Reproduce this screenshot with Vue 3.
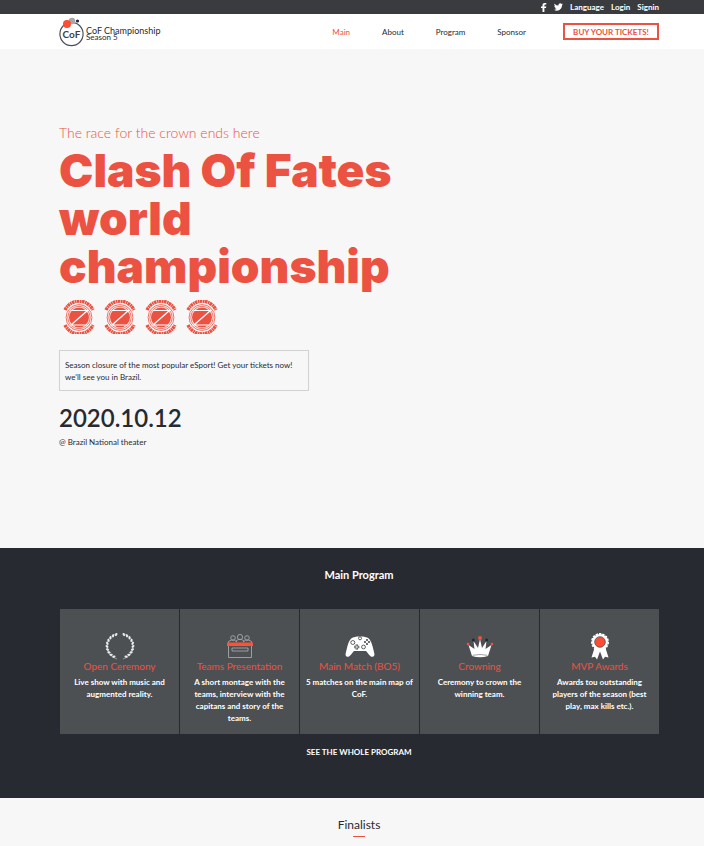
<script setup>
const tools = ['Language', 'Login', 'Signin']
const links = ['Main', 'About', 'Program', 'Sponsor']
const cards = [
  { icon: 'laurel', title: 'Open Ceremony', text: 'Live show with music and augmented reality.' },
  { icon: 'teams', title: 'Teams Presentation', text: 'A short montage with the teams, interview with the capitans and story of the teams.' },
  { icon: 'pad', title: 'Main Match (BO5)', text: '5 matches on the main map of CoF.' },
  { icon: 'crown', title: 'Crowning', text: 'Ceremony to crown the winning team.' },
  { icon: 'award', title: 'MVP Awards', text: 'Awards tou outstanding players of the season (best play, max kills etc.).' },
]
const leaves = Array.from({ length: 10 }, (_, i) => {
  const a = ((118 + i * 15) * Math.PI) / 180
  return { x: 15 + 13 * Math.cos(a), y: 14 + 12 * Math.sin(a), r: 118 + i * 15 }
})
</script>

<template>
  <div class="page">
    <div class="topbar wrap">
      <a href="#" aria-label="Facebook"><svg width="6" height="9" viewBox="0 0 6 9"><path d="M1.500 9V5.100H0V3.400h1.500V2.200C1.500.8 2.300 0 3.800 0h1.500v1.600H4.400c-.7 0-1 .3-1 .9v.9h1.900L5 5.100H3.400V9z" fill="#fff" /></svg></a>
      <a href="#" aria-label="Twitter"><svg width="9" height="8" viewBox="0 0 24 20"><path d="M24 2.400a10 10 0 0 1-2.800.8A5 5 0 0 0 23.300.5a10 10 0 0 1-3.100 1.200 5 5 0 0 0-8.400 4.500A14 14 0 0 1 1.700 1a5 5 0 0 0 1.500 6.600A5 5 0 0 1 1 7a5 5 0 0 0 3.900 4.800 5 5 0 0 1-2.200.1 5 5 0 0 0 4.600 3.400A10 10 0 0 1 0 17.400 14 14 0 0 0 21.500 5z" fill="#fff" /></svg></a>
      <a v-for="t in tools" :key="t" href="#">{{ t }}</a>
    </div>

    <header class="header wrap">
      <a class="brand" href="#">
        <svg class="logo" width="27" height="30" viewBox="0 0 27 30">
          <circle cx="12.500" cy="17" r="11.600" fill="#fff" stroke="#4b4e57" stroke-width="1.200" />
          <circle cx="13" cy="4" r="3.200" fill="#a9a5a8" />
          <circle cx="8" cy="7" r="4" fill="#fb4e33" />
          <circle cx="18.500" cy="4" r="1.600" fill="#1f2344" />
          <text x="12.500" y="21" text-anchor="middle" font-family="Lato, sans-serif" font-size="10" font-weight="700" fill="#3c3f4a">CoF</text>
        </svg>
        <span class="brand-text"><span class="brand-name">CoF Championship</span><span class="brand-sub">Season 5</span></span>
      </a>
      <nav class="nav">
        <a v-for="l in links" :key="l" href="#" :class="{ active: l === 'Main' }">{{ l }}</a>
      </nav>
      <button class="tickets" type="button">BUY YOUR TICKETS!</button>
    </header>

    <section class="hero wrap">
      <p class="lead">The race for the crown ends here</p>
      <h1>Clash Of Fates world championship</h1>
      <div class="badges">
        <svg v-for="n in 4" :key="n" width="34" height="34" viewBox="0 0 34 34" aria-hidden="true">
          <g fill="none" stroke="#ec5242">
            <path d="M3 10A15.500 15.500 0 0 1 31 10M3 25A15.500 15.500 0 0 0 31 25" stroke-width="3.400" stroke-dasharray="2.600 .5 1.600 .4" />
            <circle cx="17" cy="17.500" r="12.900" stroke-width=".8" />
            <circle cx="17" cy="17.500" r="11.200" stroke-width=".8" />
          </g>
          <circle cx="17" cy="17.500" r="10" fill="#ec5242" />
          <path d="M8.500 10.500h17L9 25h16.500" fill="none" stroke="#fff" stroke-width="1.200" />
        </svg>
      </div>
      <p class="note">Season closure of the most popular eSport! Get your tickets now! we'll see you in Brazil.</p>
      <p class="date">2020.10.12</p>
      <p class="place">@ Brazil National theater</p>
    </section>

    <section class="program wrap">
      <h2>Main Program</h2>
      <div class="cards">
        <article v-for="c in cards" :key="c.title" class="card">
          <svg v-if="c.icon === 'laurel'" width="30" height="28" viewBox="0 0 30 28">
            <g v-for="s in 2" :key="s" :transform="s === 2 ? 'matrix(-1 0 0 1 30 0)' : undefined">
              <path d="M12 27Q2 24 2 14T12 1.500" fill="none" stroke="#c5c7c9" stroke-width=".6" />
              <ellipse v-for="l in leaves" :key="l.r" :cx="l.x" :cy="l.y" rx="1.700" ry="1.100" fill="#e9eaeb" :transform="`rotate(${l.r + 45} ${l.x} ${l.y})`" />
            </g>
          </svg>
          <svg v-else-if="c.icon === 'teams'" width="30" height="28" viewBox="0 0 30 28">
            <g fill="none" stroke="#a4a6a8" stroke-width=".9">
              <circle cx="8" cy="6" r="2.300" /><circle cx="15" cy="5" r="2.600" /><circle cx="22" cy="6" r="2.300" />
              <path d="M3.500 11V9.500l3-1.500h3l2 2V8.500L13.500 7.500h3l2 1V10l2-2h3l3 1.500V11M3.500 14v11.500h23V14M7 16v3h16v-3z" />
            </g>
            <path d="M2 10.500h26V14H2z" fill="#fb5338" />
          </svg>
          <svg v-else-if="c.icon === 'pad'" width="30" height="28" viewBox="0 -1 30 28">
            <path d="M8 4.500 12 3.500h6l4 1C25 5.500 26.500 9 28 15s2.500 8-.5 8.800C25.500 24.300 23 20 21 18H9c-2 2-4.500 6.300-6.500 5.800C-.5 23 .5 21 2 15S5 5.500 8 4.500Z" fill="#fff" />
            <g fill="none" stroke="#4d5053" stroke-width=".9"><circle cx="7.800" cy="9.500" r="2" /><circle cx="18.500" cy="14" r="1.900" /><circle cx="15" cy="5.300" r="1.500" /><path d="M11.800 11.500v5M9.300 14h5" stroke-width="2.400" /></g>
            <g fill="#4d5053"><circle cx="22" cy="7" r="1.100" /><circle cx="20" cy="9" r="1.100" /><circle cx="24" cy="9" r="1.100" /><circle cx="22" cy="11" r="1.100" /></g>
            <path d="M11.800 12.200v3.600M10 14h3.600" stroke="#fff" stroke-width=".7" />
          </svg>
          <svg v-else-if="c.icon === 'crown'" width="30" height="28" viewBox="0 -1 30 28">
            <path d="M7 23 3.500 12l6 4L8.500 8l4.500 7 2-9 2 9 4.500-7-1 8 6-4L23 23Q15 25.500 7 23Z" fill="#fff" />
            <path d="M7.500 22.300q7.500-1.600 15 0" fill="none" stroke="#888b8e" stroke-width=".8" />
            <g fill="#ed5344"><circle cx="3" cy="11" r="1.300" /><circle cx="15" cy="5" r="2" /><circle cx="27" cy="11" r="1.300" /></g>
            <g fill="#25282e"><circle cx="8.300" cy="7" r="1.500" /><circle cx="21.700" cy="7" r="1.500" /></g>
          </svg>
          <svg v-else width="30" height="28" viewBox="0 0 30 28">
            <path d="m9.500 16-3 9.500 3.500-.8 2 2.800 3-8 3 8 2-2.800 3.500.8-3-9.500z" fill="#fff" />
            <circle cx="15" cy="10" r="8" fill="#fff" />
            <circle cx="15" cy="10" r="8.200" fill="none" stroke="#fff" stroke-width="1.600" stroke-dasharray="2.300 1.100" />
            <circle cx="15" cy="10" r="5.300" fill="#fb4d35" stroke="#4d5053" stroke-width=".8" />
          </svg>
          <h3>{{ c.title }}</h3>
          <p>{{ c.text }}</p>
        </article>
      </div>
      <a class="more" href="#">SEE THE WHOLE PROGRAM</a>
    </section>

    <section class="finalists wrap"><h2>Finalists</h2></section>
  </div>
</template>

<style>
body { margin: 0; background: #f7f7f7; }
</style>

<style scoped>
.page { font-family: Lato, sans-serif; font-size: 8px; line-height: 12px; color: #272a31; }
h1, h2, h3, p { margin: 0; }
a { color: inherit; text-decoration: none; }
svg { display: block; }
.wrap { padding-left: 59px; padding-right: 45px; }
.topbar { display: flex; justify-content: flex-end; align-items: center; gap: 7px; height: 14px; background: #3a3b3f; color: #fff; font-weight: 700; }
.header { display: flex; align-items: center; height: 35px; background: #fff; }
.brand { display: flex; align-items: center; flex: 1; }
.brand-text { display: flex; flex-direction: column; padding-top: 4px; line-height: 7px; }
.brand-name { font-size: 9px; }
.brand-sub { font-size: 8px; }
.nav { display: flex; gap: 32px; margin-right: 37px; }
.active { color: #ec5242; }
.tickets { width: 96px; height: 17px; padding: 0; border: 2px solid #ec5242; background: #fff; color: #ec5242; font: 700 8px/12px Lato, sans-serif; }
.hero { padding-top: 74px; padding-bottom: 100px; background: #f7f7f7; }
.lead { font-size: 14px; line-height: 20px; font-weight: 300; color: #ec5242; }
h1 { max-width: 360px; margin-top: 3px; font-family: Inter, sans-serif; font-size: 46px; line-height: 48px; font-weight: 900; color: #ec5242; }
.badges { display: flex; gap: 7px; margin: 10px 0 16px 3px; }
.note { box-sizing: border-box; width: 250px; padding: 8px 5px 7px; border: 1px solid #d2d2d2; }
.date { margin-top: 12px; font-size: 24px; line-height: 30px; font-weight: 600; }
.place { margin-top: 3px; }
.program { padding-top: 17px; padding-bottom: 40px; background: #272a31; color: #fff; text-align: center; }
.program h2 { font-size: 11px; line-height: 20px; font-weight: 700; }
.cards { display: grid; grid-template-columns: repeat(5, 1fr); gap: 1px; margin: 24px 0 12px; padding-left: 1px; }
.card { min-height: 102px; padding: 23px 6px 0; background: #4d5053; font-weight: 700; }
.card svg { margin: 0 auto; }
.card h3 { margin-bottom: 4px; font-size: 10px; line-height: 12px; font-weight: 400; color: #ec5242; }
.more { display: block; font-weight: 700; }
.finalists { padding-top: 18px; padding-bottom: 9px; text-align: center; }
.finalists h2 { font-size: 12px; line-height: 18px; font-weight: 400; }
.finalists h2::after { content: ''; display: block; width: 12px; height: 1px; margin: 2px auto 0; background: #ec5242; }
</style>
